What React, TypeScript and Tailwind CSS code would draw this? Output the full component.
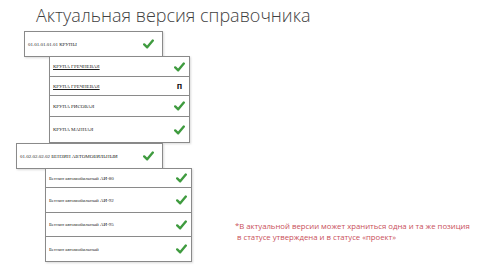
import React from "react"

function Check() {
  return (
    <svg width="11" height="10" viewBox="0 0 11 10" className="shrink-0">
      <path d="M1.2 5.4 L4.2 8.3 L9.8 1.6" fill="none" stroke="#3f9b3f" strokeWidth="2.4" strokeLinecap="round" strokeLinejoin="round" />
    </svg>
  )
}

function Row({ label, h, underline, mark }: { label: string; h: string; underline?: boolean; mark?: "check" | "p" }) {
  return (
    <div className={`flex items-center justify-between border border-[#8a8a8a] bg-white pl-[3px] pr-[4px] -mt-px first:mt-0 ${h}`}>
      <span className={`text-[5px] leading-none text-[#1f1f1f] ${underline ? "underline" : ""}`} style={{ fontFamily: '"Liberation Serif", serif' }}>
        {label}
      </span>
      {mark === "p" ? (
        <span className="w-[11px] text-center text-[9px] font-bold leading-none text-[#111]" style={{ fontFamily: '"Liberation Sans", sans-serif' }}>
          п
        </span>
      ) : (
        <Check />
      )}
    </div>
  )
}

export default function App() {
  return (
    <div className="relative h-[269px] w-[480px] overflow-hidden bg-white">
      <h1 className="pl-[36px] pt-[3px] text-[18px] font-light leading-[25px] text-[#3f3f3f]" style={{ fontFamily: '"Open Sans", sans-serif' }}>
        Актуальная версия справочника
      </h1>

      <div className="mt-[3px] ml-[24px] w-[139px] shadow-[1px_1px_2px_rgba(0,0,0,0.15)]">
        <div className="flex h-[26px] items-center justify-between border border-[#8a8a8a] bg-white pl-[3px] pr-[8px]">
          <span className="text-[5px] leading-none text-[#1f1f1f]" style={{ fontFamily: '"Liberation Serif", serif' }}>01.01.01.01.01 КРУПЫ</span>
          <Check />
        </div>
      </div>
      <div className="-mt-px ml-[49px] w-[141px] shadow-[1px_1px_2px_rgba(0,0,0,0.15)]">
        <Row label="КРУПА ГРЕЧНЕВАЯ" h="h-[21px]" underline />
        <Row label="КРУПА ГРЕЧНЕВАЯ" h="h-[20px]" underline mark="p" />
        <Row label="КРУПА РИСОВАЯ" h="h-[22px]" />
        <Row label="КРУПА МАННАЯ" h="h-[27px]" />
      </div>

      <div className="flex items-start">
        <div>
          <div className="ml-[16px] w-[147px] shadow-[1px_1px_2px_rgba(0,0,0,0.15)]">
            <div className="flex h-[26px] items-center justify-between border border-[#8a8a8a] bg-white pl-[3px] pr-[8px]">
              <span className="text-[5px] leading-none text-[#1f1f1f]" style={{ fontFamily: '"Liberation Serif", serif' }}>01.02.02.02.02 БЕНЗИН АВТОМОБИЛЬНЫЙ</span>
              <Check />
            </div>
          </div>
          <div className="-mt-px ml-[45px] w-[147px] shadow-[1px_1px_2px_rgba(0,0,0,0.15)]">
            <Row label="Бензин автомобильный АИ-80" h="h-[20px]" />
            <Row label="Бензин автомобильный АИ-92" h="h-[26px]" />
            <Row label="Бензин автомобильный АИ-95" h="h-[25px]" />
            <Row label="Бензин автомобильный" h="h-[26px]" />
          </div>
        </div>
        <p className="ml-[43px] mt-[78px] whitespace-nowrap text-[7.75px] font-medium leading-[11px] text-[#c9505a]" style={{ fontFamily: '"Open Sans", sans-serif' }}>
          *В актуальной версии может храниться одна и та же позиция
          <br />
          <span className="pl-[2px]">в статусе утверждена и в статусе «проект»</span>
        </p>
      </div>
    </div>
  )
}
